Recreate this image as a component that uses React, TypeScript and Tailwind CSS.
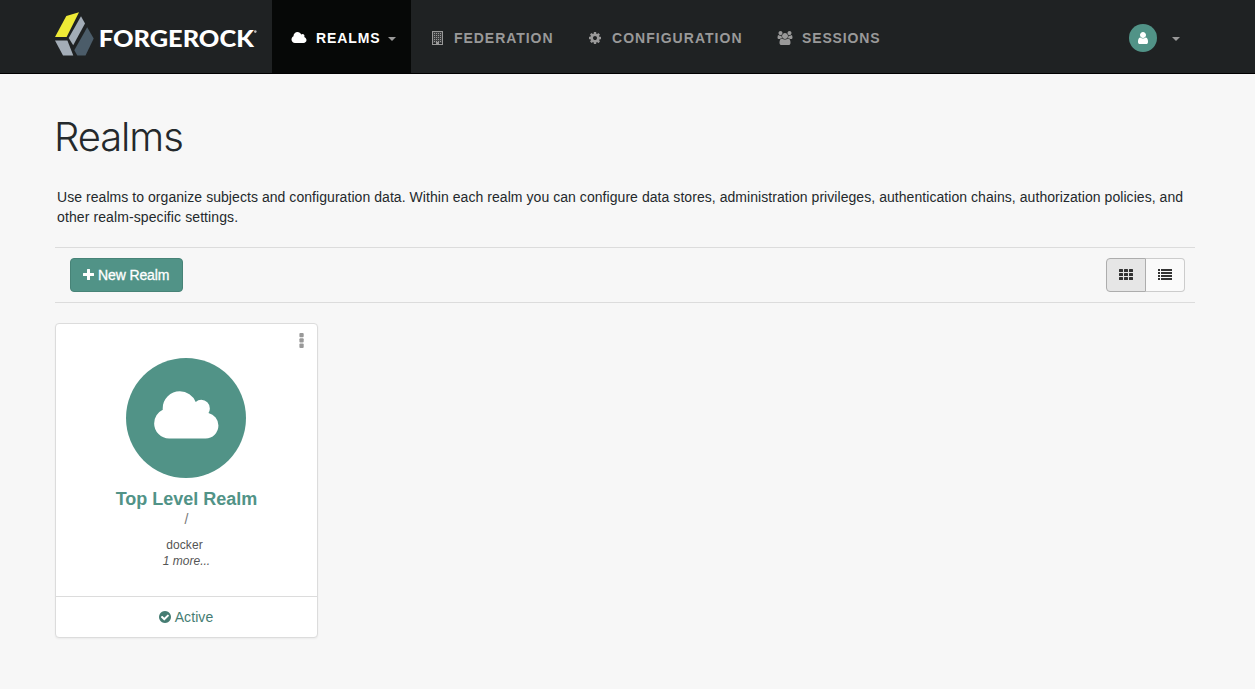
import type { ReactNode } from "react";

const PATHS = {
  cloud:
    "M1984 1152q0 159-112.5 271.5t-271.5 112.5h-1088q-185 0-316.5-131.5t-131.5-316.5q0-132 71-241.5t187-163.5q-2-28-2-43 0-212 150-362t362-150q158 0 286.5 88t187.5 230q70-62 166-62 106 0 181 75t75 181q0 75-41 138 129 30 213 134.5t84 239.5z",
  user: "M1536 1399q0 109-62.5 187t-150.5 78h-854q-88 0-150.5-78t-62.5-187q0-85 8.5-160.5t31.5-152 58.5-131 94-89 134.5-34.5q131 128 313 128t313-128q76 0 134.5 34.5t94 89 58.5 131 31.5 152 8.5 160.5zm-256-887q0 159-112.5 271.5t-271.5 112.5-271.5-112.5-112.5-271.5 112.5-271.5 271.5-112.5 271.5 112.5 112.5 271.5z",
  cog: "M1152 896q0-106-75-181t-181-75-181 75-75 181 75 181 181 75 181-75 75-181zm512-109v222q0 12-8 23t-20 13l-185 28q-19 54-39 91 35 50 107 138 10 12 10 25t-9 23q-27 37-99 108t-94 71q-12 0-26-9l-138-108q-44 23-91 38-16 136-29 186-7 28-36 28h-222q-14 0-24.5-8.5t-11.5-21.5l-28-184q-49-16-90-37l-141 107q-10 9-25 9-14 0-25-11-126-114-165-168-7-10-7-23 0-12 8-23 15-21 51-66.5t54-70.5q-27-50-41-99l-183-27q-13-2-21-12.5t-8-23.5v-222q0-12 8-23t19-13l186-28q14-46 39-92-40-57-107-138-10-12-10-24 0-10 9-23 26-36 98.5-107.5t94.5-71.5q13 0 26 10l138 107q44-23 91-38 16-136 29-186 7-28 36-28h222q14 0 24.5 8.5t11.5 21.5l28 184q49 16 90 37l142-107q9-9 24-9 13 0 25 10 129 119 165 170 7 8 7 22 0 12-8 23-15 21-51 66.5t-54 70.5q26 50 41 98l183 28q13 2 21 12.5t8 23.5z",
  group:
    "M657 896q-162 5-265 128h-134q-82 0-138-40.5t-56-118.5q0-353 124-353 6 0 43.5 21t97.5 42.5 119 21.5q67 0 133-23-5 37-5 66 0 139 81 256zm1071 637q0 120-73 189.5t-194 69.5h-874q-121 0-194-69.5t-73-189.5q0-53 3.5-103.5t14-109 26.5-108.5 43-97.5 62-81 85.5-53.5 111.5-20q10 0 43 21.5t73 48 107 48 135 21.5 135-21.5 107-48 73-48 43-21.5q61 0 111.5 20t85.5 53.5 62 81 43 97.5 26.5 108.5 14 109 3.5 103.5zm-1024-1277q0 106-75 181t-181 75-181-75-75-181 75-181 181-75 181 75 75 181zm704 384q0 159-112.5 271.5t-271.5 112.5-271.5-112.5-112.5-271.5 112.5-271.5 271.5-112.5 271.5 112.5 112.5 271.5zm576 225q0 78-56 118.5t-138 40.5h-134q-103-123-265-128 81-117 81-256 0-29-5-66 66 23 133 23 59 0 119-21.5t97.5-42.5 43.5-21q124 0 124 353zm-128-609q0 106-75 181t-181 75-181-75-75-181 75-181 181-75 181 75 75 181z",
  check:
    "M1412 734q0-28-18-46l-91-90q-19-19-45-19t-45 19l-408 407-226-226q-19-19-45-19t-45 19l-91 90q-18 18-18 46 0 27 18 45l362 362q19 19 45 19 27 0 46-19l543-543q18-18 18-45zm252 162q0 209-103 385.5t-279.5 279.5-385.5 103-385.5-103-279.5-279.5-103-385.5 103-385.5 279.5-279.5 385.5-103 385.5 103 279.5 279.5 103 385.5z",
};

function Glyph({ name, wide, className }: { name: keyof typeof PATHS; wide?: boolean; className: string }) {
  return (
    <svg viewBox={wide ? "0 0 2048 1792" : "0 0 1792 1792"} className={className} fill="currentColor">
      <path d={PATHS[name]} />
    </svg>
  );
}

function Building() {
  const cells = [2, 4, 6, 8, 10].flatMap((y) => [2, 4, 6, 8].map((x) => [x, y]));
  return (
    <svg viewBox="0 0 11 14" className="ml-px h-3.5 w-[11px] shrink-0" fill="currentColor">
      <path d="M0 0h11v14H0zM1 1v12H4v-2h3v2H10V1z" fillRule="evenodd" />
      <rect x="1" y="1" width="9" height="11" opacity="0.25" />
      {cells.map(([x, y]) => (
        <rect key={`${x}-${y}`} x={x} y={y} width="1" height="1" />
      ))}
    </svg>
  );
}

function Caret({ className = "" }: { className?: string }) {
  return (
    <svg viewBox="0 0 8 4" className={`h-1 w-2 shrink-0 ${className}`} fill="#999">
      <path d="M0 0h8L4 4z" />
    </svg>
  );
}

function Logo() {
  return (
    <svg viewBox="0 0 217 73" className="h-[73px] w-[217px] shrink-0">
      <path d="M11.3 16 24 12.3 11.6 37H0z" fill="#eeea36" />
      <path d="M26 16.3 30 23.6 18.2 45.2 13.7 38z" fill="#a3adb7" />
      <path d="M0 40.6H12.4L18.3 55.600H8z" fill="#a3adb7" />
      <path d="M32.2 27.3 38.7 38.5 30.5 55.600H22.3L19.3 50.3z" fill="#4b5c69" />
      <text x="43.800" y="46.600" fill="#fff" fontSize="22.5" fontWeight="900" fontFamily="Lato, sans-serif" textLength="155" lengthAdjust="spacingAndGlyphs">
        FORGEROCK
      </text>
      <circle cx="200.3" cy="31.600" r="1.3" fill="#bbb" />
    </svg>
  );
}

function NavItem({ icon, children, className }: { icon: ReactNode; children: ReactNode; className: string }) {
  return (
    <a className={`flex h-[73px] items-center pt-[3px] text-sm leading-5 font-bold ${className}`}>
      {icon}
      {children}
    </a>
  );
}

export default function App() {
  return (
    <div className="min-h-[689px] bg-[#f7f7f7] font-['Liberation_Sans',Arial,sans-serif] text-sm leading-5 text-[#24292c]">
      <header className="h-[74px] border-b border-black bg-[#1f2223]">
        <div className="mx-auto flex w-[1145px] pr-[5px]">
          <Logo />
          <NavItem
            className="w-[139px] bg-[#060807] pl-[18px] text-white"
            icon={<Glyph name="cloud" wide className="mr-[9px] ml-px h-3.5 w-4 shrink-0" />}
          >
            <span className="tracking-[0.9px]">REALMS</span>
            <Caret className="mt-0.5 ml-[7px]" />
          </NavItem>
          <NavItem className="w-[158px] pl-5 text-[#999]" icon={<Building />}>
            <span className="ml-[11px] tracking-[0.95px]">FEDERATION</span>
          </NavItem>
          <NavItem
            className="w-[190px] pl-[19px] text-[#999]"
            icon={<Glyph name="cog" className="h-3.5 w-3.5 shrink-0" />}
          >
            <span className="ml-[10px] tracking-[1.03px]">CONFIGURATION</span>
          </NavItem>
          <NavItem
            className="pl-[18px] text-[#999]"
            icon={<Glyph name="group" wide className="h-3.5 w-4 shrink-0" />}
          >
            <span className="ml-[9px] tracking-[0.87px]">SESSIONS</span>
          </NavItem>
          <div className="ml-auto flex h-[73px] items-center pt-[3px] pr-[15px]">
            <span className="flex h-7 w-7 items-center justify-center rounded-full bg-[#519387] pr-px text-white">
              <Glyph name="user" className="h-3.5 w-3.5" />
            </span>
            <Caret className="mt-0.5 ml-[15px]" />
          </div>
        </div>
      </header>

      <main className="mx-auto w-[1145px] pr-[5px]">
        <h1 className="-ml-px pt-[40px] font-[Inter,sans-serif] text-[40px] leading-[46px] font-light tracking-[-1.1px]">Realms</h1>
        <p className="mt-[27px] pl-0.5 text-sm leading-5 whitespace-nowrap">
          <span className="tracking-[0.056px]">
            Use realms to organize subjects and configuration data. Within each realm you can configure data stores,
            administration privileges, authentication chains, authorization policies, and
          </span>
          <br />
          <span className="tracking-[0.1px]">other realm-specific settings.</span>
        </p>

        <div className="mt-5 flex h-14 items-center justify-between border-y border-[#dcdcdc] pr-2.5 pl-[15px]">
          <button className="flex h-[34px] w-[113px] items-center rounded border border-[#478377] bg-[#519387] pl-3 text-white">
            <svg viewBox="0 0 11 11" className="mr-1 mb-px h-[11px] w-[11px] shrink-0" fill="currentColor">
              <path d="M4 0.5q0-.5.5-.5h2q.5 0 .5.5V4h3.500q.5 0 .5.5v2q0 .5-.5.5H7v3.500q0 .5-.5.5h-2q-.5 0-.5-.5V7H.5Q0 7 0 6.500v-2Q0 4 .5 4H4z" />
            </svg>
            <span className="tracking-[-0.12px] whitespace-nowrap [-webkit-text-stroke:0.3px_white]">New Realm</span>
          </button>
          <div className="flex h-[34px]">
            <button className="flex w-10 items-center justify-center rounded-l border border-[#adadad] bg-[#e6e6e6]">
              <svg viewBox="0 0 14 11" className="mb-px h-[11px] w-3.5" fill="#333">
                {[0, 4, 8].map((y) => [0, 5, 10].map((x) => <rect key={`${x}-${y}`} x={x} y={y} width="4" height="3" rx="0.5" />))}
              </svg>
            </button>
            <button className="flex w-[39px] items-center justify-center rounded-r border border-l-0 border-[#ccc] bg-[#fafafa]">
              <svg viewBox="0 0 14 11" className="mb-px h-[11px] w-3.5" fill="#333">
                {[0, 3, 6, 9].map((y) => (
                  <g key={y}>
                    <rect x="0" y={y} width="2" height="2" />
                    <rect x="3" y={y} width="11" height="2" />
                  </g>
                ))}
              </svg>
            </button>
          </div>
        </div>

        <section className="relative mt-5 flex h-[315px] w-[263px] flex-col items-center rounded border border-[#dcdcdc] bg-white shadow-[0_1px_2px_rgba(0,0,0,0.05)]">
          <button className="absolute top-[9px] right-[13px]">
            <svg viewBox="0 0 5 15" className="h-[15px] w-[5px]" fill="#999">
              <rect x="0.4" y="0" width="4.3" height="4.3" rx="1" />
              <rect x="0.4" y="5.3" width="4.3" height="4.3" rx="1" />
              <rect x="0.4" y="10.600" width="4.3" height="4.3" rx="1" />
            </svg>
          </button>
          <div className="mt-[34px] mr-px flex h-[120px] w-[120px] shrink-0 items-center justify-center rounded-full bg-[#519387] text-white">
            <Glyph name="cloud" wide className="mt-[-2px] h-[60px] w-[68.57px]" />
          </div>
          <h2 className="mt-[11px] text-lg leading-5 font-bold text-[#519387]">Top Level Realm</h2>
          <p className="leading-5 text-[#777]">/</p>
          <ul className="mt-2 text-center text-xs leading-4 text-[#555]">
            <li className="pr-1 tracking-[0.1px]">docker</li>
            <li className="italic">1 more...</li>
          </ul>
          <div className="mt-auto flex h-[41px] w-full shrink-0 items-center justify-center border-t border-[#dcdcdc] pr-px text-[#457c72]">
            <Glyph name="check" className="mr-[3px] -ml-px h-3.5 w-3.5" />
            <span className="tracking-[0.1px]">Active</span>
          </div>
        </section>
      </main>
    </div>
  );
}
